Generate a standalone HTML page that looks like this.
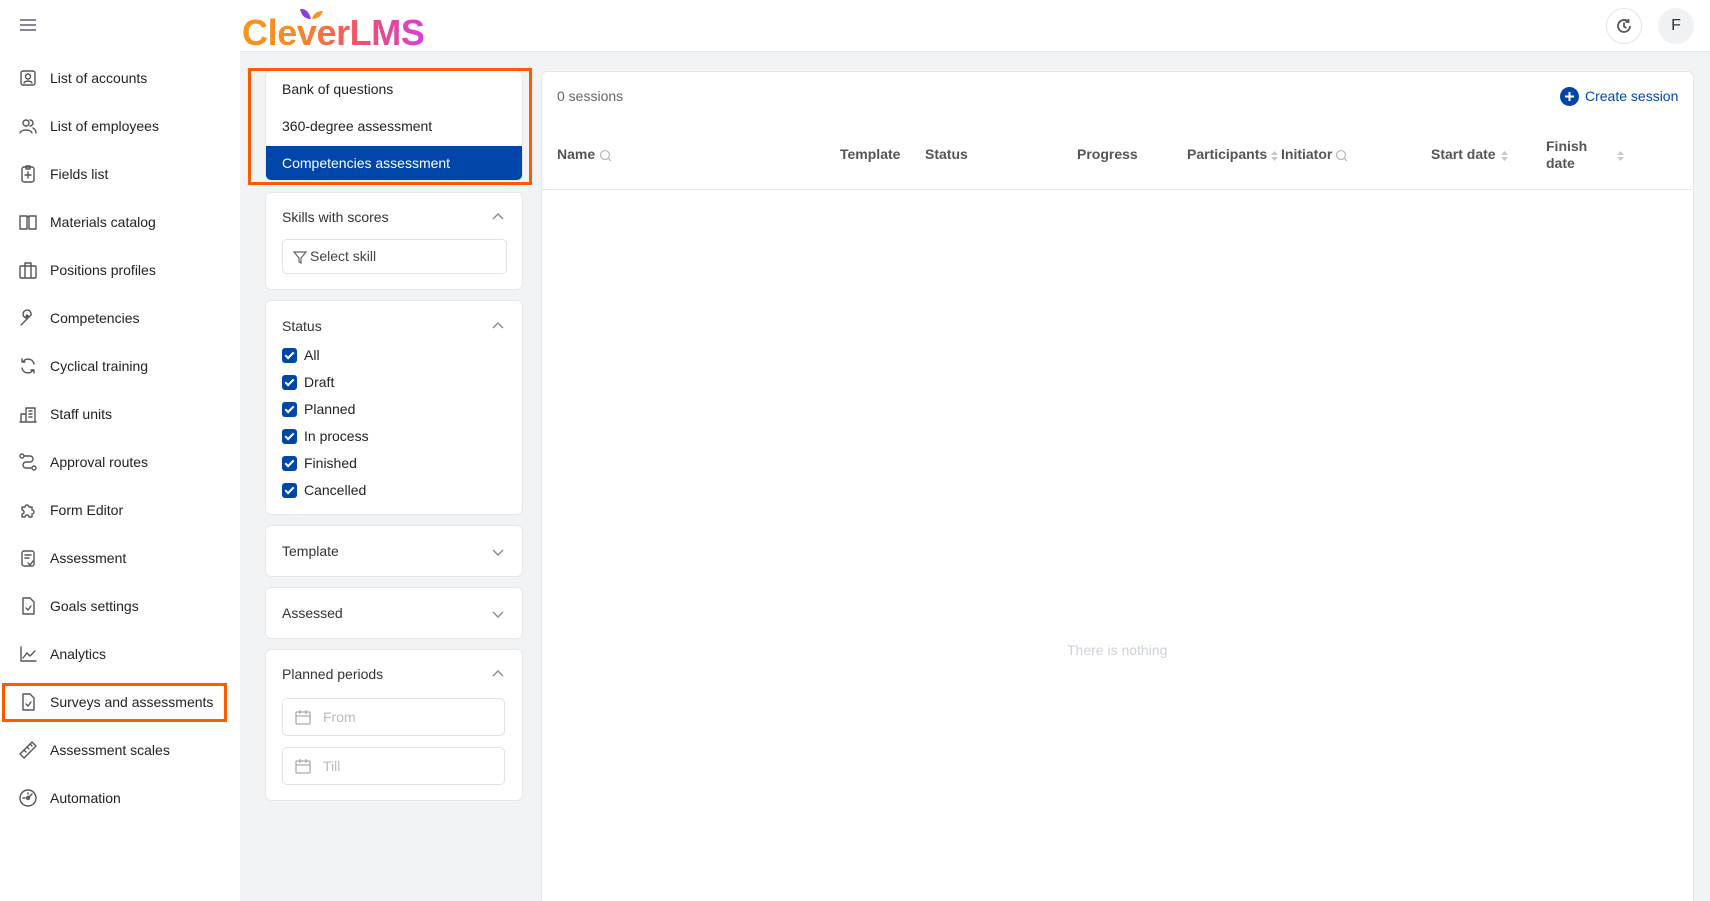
<!DOCTYPE html>
<html><head><meta charset="utf-8">
<style>
*{box-sizing:border-box;margin:0;padding:0}
html,body{width:1710px;height:901px;overflow:hidden}
body{background:#f2f3f5;font-family:"Liberation Sans",Arial,sans-serif;color:#222;position:relative}
.abs{position:absolute}
#side{left:0;top:0;width:240px;height:901px;background:#fff}
#top{left:240px;top:0;width:1470px;height:52px;background:#fff;border-bottom:1px solid #e4e6ea}
.nav{position:absolute;left:0;width:240px;height:40px;display:flex;align-items:center;font-size:14px;color:#222}
.nav svg{position:absolute;left:18px;width:20px;height:20px;fill:none;stroke:#555;stroke-width:1.4;stroke-linecap:round;stroke-linejoin:round}
.nav span{position:absolute;left:50px}
.card{position:absolute;background:#fff;border:1px solid #e6e8ec;border-radius:6px}
.ct{position:absolute;left:16px;font-size:14px;color:#333}
.chev{position:absolute;right:18px;width:12px;height:12px;fill:none;stroke:#888;stroke-width:1.4}
.cb{position:absolute;left:16px;width:15px;height:15px;background:#0046a8;border-radius:3px}
.cb:after{content:"";position:absolute;left:5px;top:2px;width:3px;height:7px;border:solid #fff;border-width:0 2px 2px 0;transform:rotate(45deg)}
.cbl{position:absolute;left:38px;font-size:14px;color:#222}
.inp{position:absolute;border:1px solid #dfe2e6;border-radius:5px;background:#fff}
.th{position:absolute;top:146px;font-size:14px;color:#555;font-weight:bold}
</style></head><body>
<div id="side" class="abs"></div>
<div id="top" class="abs"></div>
<div class="abs" style="left:20px;top:19px;width:16px;height:2px;background:#858795"></div>
<div class="abs" style="left:20px;top:24px;width:16px;height:2px;background:#858795"></div>
<div class="abs" style="left:20px;top:29px;width:16px;height:2px;background:#858795"></div>
<div class="abs" style="left:242px;top:15px;font-size:36px;font-weight:bold;letter-spacing:-0.4px;background:linear-gradient(90deg,#f7941d 0%,#f58a2a 30%,#f0605a 55%,#e8507a 70%,#d63fd6 100%);-webkit-background-clip:text;background-clip:text;color:transparent;line-height:36px">CleverLMS</div>
<svg class="abs" style="left:298px;top:8px" width="30" height="14"><path d="M2 1 Q10 0 13 11 Q4 11 2 1Z" fill="#8a3fe0"/><path d="M14 11 Q16 3 25 3 Q22 11 14 11Z" fill="#f7941d"/></svg>
<div class="abs" style="left:1606px;top:8px;width:36px;height:36px;border:1px solid #e4e6ea;border-radius:50%;background:#fff"></div>
<svg class="abs" style="left:1614px;top:16px" width="20" height="20" fill="none" stroke="#555" stroke-width="1.8"><path d="M16 10a6 6 0 1 1-2-4.5"/><path d="M14.5 3v3h-3"/><path d="M10 6.5v4l2.5 1.5"/></svg>
<div class="abs" style="left:1658px;top:8px;width:36px;height:36px;border-radius:50%;background:#f0f1f3;font-size:16px;color:#333;text-align:center;line-height:36px">F</div>

<div class="nav" style="top:58px"><svg viewBox="0 0 20 20"><rect x="3" y="3" width="14" height="14" rx="2"/><circle cx="10" cy="8.5" r="2.5"/><path d="M6 15c1-2.5 7-2.5 8 0"/></svg><span>List of accounts</span></div>
<div class="nav" style="top:106px"><svg viewBox="0 0 20 20"><circle cx="8" cy="7" r="3"/><path d="M2 17c1-4 11-4 12 0"/><path d="M12 4a3 3 0 0 1 0 6M15 12c2 1 3 3 3 5"/></svg><span>List of employees</span></div>
<div class="nav" style="top:154px"><svg viewBox="0 0 20 20"><rect x="4" y="3" width="12" height="15" rx="2"/><path d="M8 2h4v3H8zM10 8v6M7 11h6"/></svg><span>Fields list</span></div>
<div class="nav" style="top:202px"><svg viewBox="0 0 20 20"><path d="M2 4h7v13H2zM11 4h7v13h-7zM9 5h2"/></svg><span>Materials catalog</span></div>
<div class="nav" style="top:250px"><svg viewBox="0 0 20 20"><rect x="2" y="6" width="16" height="12" rx="1"/><path d="M7 6V3h6v3M7 6v12M13 6v12"/></svg><span>Positions profiles</span></div>
<div class="nav" style="top:298px"><svg viewBox="0 0 20 20"><path d="M3 17l7-7a4 4 0 1 1 3-3l-2 2-2-2-1 1 2 2-7 7z"/></svg><span>Competencies</span></div>
<div class="nav" style="top:346px"><svg viewBox="0 0 20 20"><path d="M16 8a6 6 0 0 0-11-2M4 12a6 6 0 0 0 11 2"/><path d="M4 3v3h3M16 17v-3h-3"/></svg><span>Cyclical training</span></div>
<div class="nav" style="top:394px"><svg viewBox="0 0 20 20"><path d="M2 18h16M3 18v-8h5v8M8 18V4h9v14M11 7h3M11 10h3M11 13h3"/></svg><span>Staff units</span></div>
<div class="nav" style="top:442px"><svg viewBox="0 0 20 20"><circle cx="4" cy="4" r="2"/><circle cx="16" cy="16" r="2"/><path d="M7 4h5a3 3 0 0 1 0 6H8a3 3 0 0 0 0 6h5"/></svg><span>Approval routes</span></div>
<div class="nav" style="top:490px"><svg viewBox="0 0 20 20"><path d="M4 7h3a2 2 0 1 1 4 0h3v3a2 2 0 1 1 0 4v3h-3a2 2 0 1 0-4 0H4v-3a2 2 0 1 0 0-4z"/></svg><span>Form Editor</span></div>
<div class="nav" style="top:538px"><svg viewBox="0 0 20 20"><rect x="4" y="3" width="12" height="15" rx="2"/><path d="M7 7h6M7 10h4M10 15l2 2 3-4"/></svg><span>Assessment</span></div>
<div class="nav" style="top:586px"><svg viewBox="0 0 20 20"><path d="M5 2h7l4 4v12H5z"/><path d="M8 12l2 2 3-4"/></svg><span>Goals settings</span></div>
<div class="nav" style="top:634px"><svg viewBox="0 0 20 20"><path d="M3 3v14h15M5 14l4-5 3 3 5-5"/></svg><span>Analytics</span></div>
<div class="nav" style="top:682px"><svg viewBox="0 0 20 20"><path d="M5 2h7l4 4v12H5z"/><path d="M8 12l2 2 3-4"/></svg><span>Surveys and assessments</span></div>
<div class="nav" style="top:730px"><svg viewBox="0 0 20 20"><path d="M2 14L14 2l4 4L6 18z M6 10l2 2M9 7l2 2M12 4l2 2"/></svg><span>Assessment scales</span></div>
<div class="nav" style="top:778px"><svg viewBox="0 0 20 20"><circle cx="10" cy="10" r="8"/><path d="M10 10l4-4M5 10h2M10 5v1"/><circle cx="10" cy="10" r="1.5"/></svg><span>Automation</span></div>
<div class="abs" style="left:2px;top:683px;width:225px;height:39px;border:3px solid #ff5a00"></div>

<div class="card" style="left:265px;top:70px;width:258px;height:111px;overflow:hidden">
  <div class="ct" style="top:10px;color:#222">Bank of questions</div>
  <div class="ct" style="top:47px;color:#222">360-degree assessment</div>
  <div class="abs" style="left:0;top:75px;width:258px;height:36px;background:#0046a8"></div>
  <div class="ct" style="top:84px;color:#fff">Competencies assessment</div>
</div>
<div class="abs" style="left:248px;top:68px;width:284px;height:117px;border:3px solid #ff5a00"></div>

<div class="card" style="left:265px;top:192px;width:258px;height:98px">
  <div class="ct" style="top:16px">Skills with scores</div>
  <svg class="chev" style="top:18px"><path d="M1 8l5-5 5 5"/></svg>
  <div class="inp" style="left:16px;top:46px;width:225px;height:35px"></div>
  <svg class="abs" style="left:26px;top:56px" width="16" height="16" fill="none" stroke="#666" stroke-width="1.2"><path d="M2 3h12l-5 6v5l-2-1V9z"/></svg>
  <div class="abs" style="left:44px;top:55px;font-size:14px;color:#444">Select skill</div>
</div>

<div class="card" style="left:265px;top:300px;width:258px;height:215px">
  <div class="ct" style="top:17px">Status</div>
  <svg class="chev" style="top:19px"><path d="M1 8l5-5 5 5"/></svg>
  <div class="cb" style="top:47px"></div><div class="cbl" style="top:46px">All</div>
  <div class="cb" style="top:74px"></div><div class="cbl" style="top:73px">Draft</div>
  <div class="cb" style="top:101px"></div><div class="cbl" style="top:100px">Planned</div>
  <div class="cb" style="top:128px"></div><div class="cbl" style="top:127px">In process</div>
  <div class="cb" style="top:155px"></div><div class="cbl" style="top:154px">Finished</div>
  <div class="cb" style="top:182px"></div><div class="cbl" style="top:181px">Cancelled</div>
</div>

<div class="card" style="left:265px;top:525px;width:258px;height:52px">
  <div class="ct" style="top:17px">Template</div>
  <svg class="chev" style="top:20px"><path d="M1 4l5 5 5-5"/></svg>
</div>
<div class="card" style="left:265px;top:587px;width:258px;height:52px">
  <div class="ct" style="top:17px">Assessed</div>
  <svg class="chev" style="top:20px"><path d="M1 4l5 5 5-5"/></svg>
</div>
<div class="card" style="left:265px;top:649px;width:258px;height:152px">
  <div class="ct" style="top:16px">Planned periods</div>
  <svg class="chev" style="top:18px"><path d="M1 8l5-5 5 5"/></svg>
  <div class="inp" style="left:16px;top:48px;width:223px;height:38px"></div>
  <svg class="abs" style="left:28px;top:58px" width="18" height="18" fill="none" stroke="#aaa" stroke-width="1.3"><rect x="2" y="4" width="14" height="12" rx="1"/><path d="M2 8h14M6 2v4M12 2v4"/></svg>
  <div class="abs" style="left:57px;top:59px;font-size:14px;color:#bbb">From</div>
  <div class="inp" style="left:16px;top:97px;width:223px;height:38px"></div>
  <svg class="abs" style="left:28px;top:107px" width="18" height="18" fill="none" stroke="#aaa" stroke-width="1.3"><rect x="2" y="4" width="14" height="12" rx="1"/><path d="M2 8h14M6 2v4M12 2v4"/></svg>
  <div class="abs" style="left:57px;top:108px;font-size:14px;color:#bbb">Till</div>
</div>

<div class="card" style="left:541px;top:71px;width:1153px;height:830px;border-bottom:none;border-radius:6px 6px 0 0"></div>
<div class="abs" style="left:557px;top:88px;font-size:14px;color:#666">0 sessions</div>
<svg class="abs" style="left:1560px;top:87px" width="19" height="19"><circle cx="9.5" cy="9.5" r="9.5" fill="#0046a8"/><path d="M9.5 5v9M5 9.5h9" stroke="#fff" stroke-width="2"/></svg>
<div class="abs" style="left:1585px;top:88px;font-size:14px;color:#0046a8">Create session</div>
<div class="th" style="left:557px">Name</div>
<svg class="abs" style="left:599px;top:149px" width="13" height="13" fill="none" stroke="#bbb" stroke-width="1.3"><circle cx="6" cy="6" r="4.5"/><path d="M9 9l3 3"/></svg>
<div class="th" style="left:840px">Template</div>
<div class="th" style="left:925px">Status</div>
<div class="th" style="left:1077px">Progress</div>
<div class="th" style="left:1187px">Participants</div>
<svg class="abs" style="left:1270px;top:150px" width="9" height="12" fill="#c8c8c8"><path d="M1 5l3.5-4L8 5zM1 7l3.5 4L8 7z"/></svg>
<div class="th" style="left:1281px">Initiator</div>
<svg class="abs" style="left:1335px;top:149px" width="13" height="13" fill="none" stroke="#bbb" stroke-width="1.3"><circle cx="6" cy="6" r="4.5"/><path d="M9 9l3 3"/></svg>
<div class="th" style="left:1431px">Start date</div>
<svg class="abs" style="left:1500px;top:150px" width="9" height="12" fill="#c8c8c8"><path d="M1 5l3.5-4L8 5zM1 7l3.5 4L8 7z"/></svg>
<div class="th" style="left:1546px;top:138px;line-height:17px">Finish<br>date</div>
<svg class="abs" style="left:1616px;top:150px" width="9" height="12" fill="#c8c8c8"><path d="M1 5l3.5-4L8 5zM1 7l3.5 4L8 7z"/></svg>
<div class="abs" style="left:542px;top:189px;width:1151px;height:1px;background:#e6e8ec"></div>
<div class="abs" style="left:1067px;top:642px;font-size:14px;color:#cdd2da">There is nothing</div>
</body></html>
